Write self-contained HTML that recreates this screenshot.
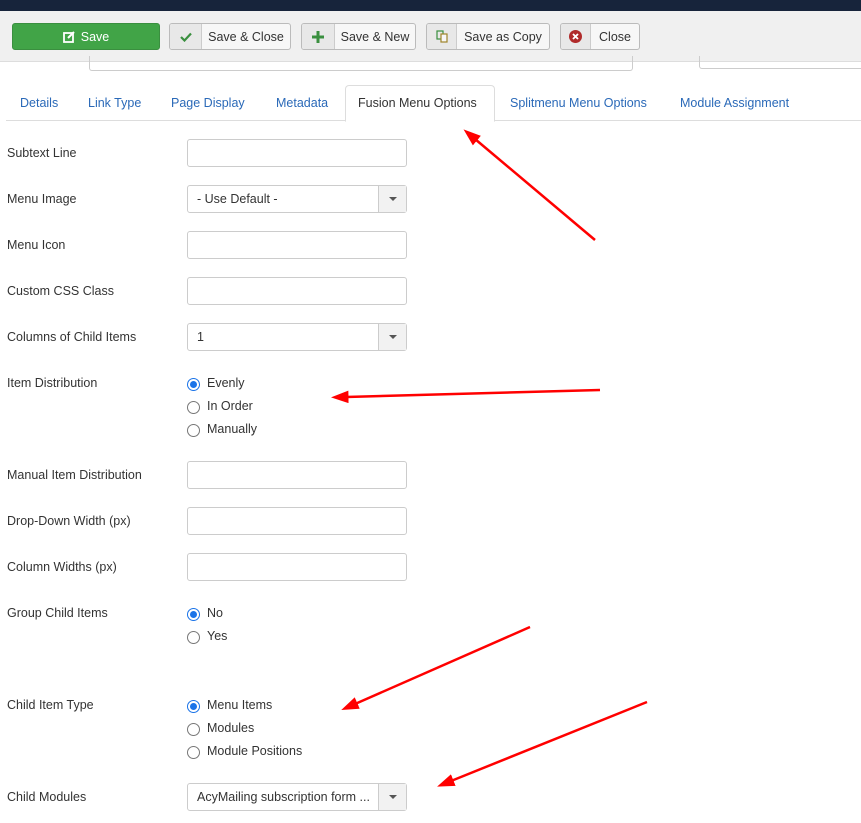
<!DOCTYPE html>
<html><head><meta charset="utf-8"><style>
*{box-sizing:border-box}
body{margin:0;width:861px;height:823px;overflow:hidden;background:#fff;font-family:"Liberation Sans",Arial,sans-serif;font-size:13px;color:#333;position:relative}
.a{position:absolute}
.top{left:0;top:0;width:861px;height:11px;background:#17243b}
.tb{left:0;top:11px;width:861px;height:51px;background:#f0f0f0;border-bottom:1px solid #ddd}
.btn{position:absolute;top:23px;height:27px;border:1px solid #bbb;border-radius:3px;background:#f7f7f7;display:flex;align-items:center;font-size:12.5px;color:#333;overflow:hidden}
.btn .ic{height:100%;background:#e8e8e8;border-right:1px solid #ccc;display:flex;align-items:center;justify-content:center}
.btn .tx{flex:1;text-align:center}
.lbl{position:absolute;left:7px;font-size:12.5px;color:#333}
.inp{position:absolute;left:187px;width:220px;height:28px;border:1px solid #ccc;border-radius:3px;background:#fff}
.sel .v{position:absolute;left:9px;top:6px;font-size:12.5px}
.sel .dd{position:absolute;right:0;top:0;width:28px;height:26px;background:#f2f2f2;border-left:1px solid #ccc}
.sel .dd:after{content:"";position:absolute;left:10px;top:11px;border-left:4px solid transparent;border-right:4px solid transparent;border-top:4px solid #555}
.r{position:absolute;left:187px;font-size:12.5px}
.r i{position:absolute;left:0;top:1px;width:13px;height:13px;border:1px solid #777;border-radius:50%;background:#fff}
.r i.on{border-color:#1a73e8}
.r i.on:after{content:"";position:absolute;left:2px;top:2px;width:7px;height:7px;border-radius:50%;background:#1a73e8}
.r span{position:absolute;left:20px;top:-1px;white-space:nowrap}
.tab{position:absolute;top:96px;font-size:12.5px;color:#2a69b8}
</style></head><body>
<div class="a top"></div>
<div class="a tb"></div>
<div class="btn" style="left:12px;width:148px;background:#41a447;border-color:#3a8f3f;color:#fff;justify-content:center;font-weight:normal"><svg width="12" height="12" viewBox="0 0 12 12" style="margin-right:6px"><rect x="1" y="2" width="9" height="9" fill="none" stroke="#fff" stroke-width="1.8"/><path d="M5 7 L11 1" stroke="#fff" stroke-width="2"/></svg>Save</div>
<div class="btn" style="left:169px;width:122px"><div class="ic" style="width:32px"><svg width="12" height="10"><path d="M1 5 L4.5 8.5 L11 1.5" stroke="#3a8f3f" stroke-width="2.2" fill="none"/></svg></div><div class="tx">Save &amp; Close</div></div>
<div class="btn" style="left:301px;width:115px"><div class="ic" style="width:33px"><svg width="12" height="12"><path d="M6 0V12M0 6H12" stroke="#3a8f3f" stroke-width="3"/></svg></div><div class="tx">Save &amp; New</div></div>
<div class="btn" style="left:426px;width:124px"><div class="ic" style="width:30px"><svg width="12" height="13"><rect x="1" y="1" width="6" height="8" fill="none" stroke="#3a8f3f" stroke-width="1.2"/><rect x="5" y="4" width="6" height="8" fill="#f7f7f7" stroke="#a0852a" stroke-width="1.2"/></svg></div><div class="tx">Save as Copy</div></div>
<div class="btn" style="left:560px;width:80px"><div class="ic" style="width:30px"><svg width="13" height="13"><circle cx="6.5" cy="6.5" r="6.5" fill="#b02a2a"/><path d="M4 4L9 9M9 4L4 9" stroke="#fff" stroke-width="1.8"/></svg></div><div class="tx">Close</div></div>
<div class="a" style="left:89px;top:56px;width:544px;height:15px;border:1px solid #ccc;border-top:none;border-radius:0 0 3px 3px"></div>
<div class="a" style="left:699px;top:56px;width:170px;height:13px;border:1px solid #ccc;border-top:none;border-radius:0 0 3px 3px"></div>
<div class="a" style="left:6px;top:120px;width:855px;height:1px;background:#ddd"></div>
<div class="a" style="left:345px;top:85px;width:150px;height:37px;border:1px solid #ddd;border-bottom:1px solid #fff;border-radius:4px 4px 0 0;background:#fff"></div>
<div class="tab" style="left:20px">Details</div>
<div class="tab" style="left:88px">Link Type</div>
<div class="tab" style="left:171px">Page Display</div>
<div class="tab" style="left:276px">Metadata</div>
<div class="tab" style="left:358px;color:#333">Fusion Menu Options</div>
<div class="tab" style="left:510px">Splitmenu Menu Options</div>
<div class="tab" style="left:680px">Module Assignment</div>

<div class="lbl" style="top:146px">Subtext Line</div><div class="inp" style="top:139px"></div>
<div class="lbl" style="top:192px">Menu Image</div><div class="inp sel" style="top:185px"><span class="v">- Use Default -</span><div class="dd"></div></div>
<div class="lbl" style="top:238px">Menu Icon</div><div class="inp" style="top:231px"></div>
<div class="lbl" style="top:284px">Custom CSS Class</div><div class="inp" style="top:277px"></div>
<div class="lbl" style="top:330px">Columns of Child Items</div><div class="inp sel" style="top:323px"><span class="v">1</span><div class="dd"></div></div>
<div class="lbl" style="top:376px">Item Distribution</div>
<div class="r" style="top:377px"><i class="on"></i><span>Evenly</span></div>
<div class="r" style="top:400px"><i></i><span>In Order</span></div>
<div class="r" style="top:423px"><i></i><span>Manually</span></div>
<div class="lbl" style="top:468px">Manual Item Distribution</div><div class="inp" style="top:461px"></div>
<div class="lbl" style="top:514px">Drop-Down Width (px)</div><div class="inp" style="top:507px"></div>
<div class="lbl" style="top:560px">Column Widths (px)</div><div class="inp" style="top:553px"></div>
<div class="lbl" style="top:606px">Group Child Items</div>
<div class="r" style="top:607px"><i class="on"></i><span>No</span></div>
<div class="r" style="top:630px"><i></i><span>Yes</span></div>
<div class="lbl" style="top:698px">Child Item Type</div>
<div class="r" style="top:699px"><i class="on"></i><span>Menu Items</span></div>
<div class="r" style="top:722px"><i></i><span>Modules</span></div>
<div class="r" style="top:745px"><i></i><span>Module Positions</span></div>
<div class="lbl" style="top:790px">Child Modules</div><div class="inp sel" style="top:783px"><span class="v">AcyMailing subscription form ...</span><div class="dd"></div></div>

<svg class="a" style="left:0;top:0" width="861" height="823">
<defs><marker id="m" markerWidth="7" markerHeight="5" refX="1" refY="2.5" orient="auto"><path d="M0 0L7 2.5L0 5Z" fill="#f00"/></marker></defs>
<g stroke="#f00" stroke-width="2.5" marker-end="url(#m)">
<line x1="595" y1="240" x2="475" y2="139"/>
<line x1="600" y1="390" x2="346" y2="397"/>
<line x1="530" y1="627" x2="355" y2="704"/>
<line x1="647" y1="702" x2="451" y2="781"/>
</g></svg>
</body></html>
